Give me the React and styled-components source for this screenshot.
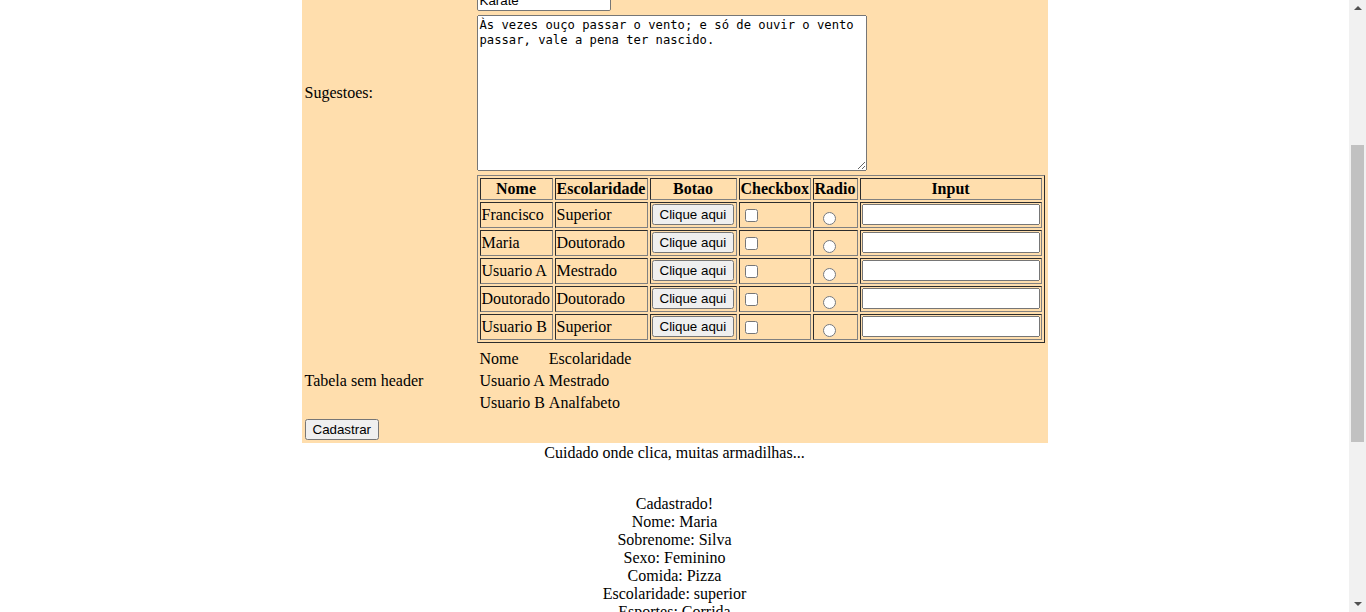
import React, { useLayoutEffect, useRef } from "react";
import styled, { createGlobalStyle } from "styled-components";

const GlobalStyle = createGlobalStyle`
  html {
    overflow-y: scroll;
  }
  body {
    margin: 8px 25px 8px 8px;
    font-family: "Liberation Serif", "Times New Roman", serif;
    font-size: 16px;
    line-height: 18px;
    color: #000;
    background: #fff;
  }
`;

/* the window's scrollbar, as the reference shows it */
const ScrollTrack = styled.div`
  position: fixed;
  top: 0;
  right: 0;
  width: 17px;
  height: 100vh;
  background: #f1f1f1;
  display: flex;
  flex-direction: column;
  align-items: center;
  justify-content: space-between;
  padding: 6px 0;
  box-sizing: border-box;
  z-index: 10;
`;

const Arrow = styled.div`
  width: 0;
  height: 0;
  border-left: 4px solid transparent;
  border-right: 4px solid transparent;
  ${(p) =>
    p.$down
      ? "border-top: 4px solid #505050;"
      : "border-bottom: 4px solid #505050;"}
`;

const Thumb = styled.div`
  position: fixed;
  right: 2px;
  top: 145px;
  width: 13px;
  height: 297px;
  background: #c1c1c1;
  z-index: 11;
`;

const Title = styled.h1`
  text-align: center;
  font-size: 32px;
  line-height: 37px;
  margin: 21px 0;
`;

const Form = styled.form`
  display: grid;
  grid-template-columns: 170px 570px;
  gap: 2px;
  padding: 2px;
  width: 746px;
  box-sizing: border-box;
  margin: 0 auto;
  background: #ffdead;
  align-items: center;
`;

const Cell = styled.div`
  padding: 1px;
  min-height: 18px;
`;

const TextField = styled.input`
  font: 13.333px "Liberation Sans", Arial, sans-serif;
  width: 178px;
  height: 21px;
  box-sizing: border-box;
  margin: 0;
  vertical-align: middle;
`;

const Choice = styled.label`
  margin-right: 4px;
`;

const Select = styled.select`
  font: 13.333px "Liberation Sans", Arial, sans-serif;
  margin: 0;
`;

const ListBox = styled.select`
  display: block;
  font: 13.333px "Liberation Sans", Arial, sans-serif;
  width: 134px;
  margin: 0;
`;

const Suggestions = styled.textarea`
  display: block;
  box-sizing: border-box;
  width: 390px;
  height: 156px;
  margin: 0;
  padding: 2px;
  font-family: "DejaVu Sans Mono", "Liberation Mono", monospace;
  font-size: 12.2px;
  line-height: 15px;
  color: #000;
`;

const DataTable = styled.table`
  width: 568px;
  table-layout: fixed;
  border: 1px outset grey;
  border-spacing: 2px;
  border-collapse: separate;
`;

const Head = styled.th`
  width: ${(p) => p.$w}px;
  box-sizing: border-box;
  border: 1px inset grey;
  padding: 1px;
  font-weight: bold;
  text-align: center;
  white-space: nowrap;
`;

const Data = styled.td`
  box-sizing: border-box;
  height: 26px;
  border: 1px inset grey;
  padding: 1px;
  vertical-align: middle;
  white-space: nowrap;
  overflow: hidden;
`;

const RowButton = styled.button`
  font: 13.333px "Liberation Sans", Arial, sans-serif;
  margin: 0;
  vertical-align: middle;
`;

const Check = styled.input`
  vertical-align: middle;
  margin: 3px 3px 3px 4px;
`;

const Radio = styled.input`
  vertical-align: middle;
  margin: 6px 3px 0 8px;
`;

const PlainTable = styled.table`
  border-spacing: 2px;
  border-collapse: separate;
`;

const PlainCell = styled.td`
  padding: 1px;
  white-space: nowrap;
`;

const Submit = styled.button`
  font: 13.333px "Liberation Sans", Arial, sans-serif;
  margin: 0;
  display: block;
`;

const Notice = styled.div`
  text-align: center;
  margin-top: 1px;
`;

const Result = styled.div`
  text-align: center;
  margin-top: 33px;
  padding-bottom: 290px;
`;

const users = [
  ["Francisco", "Superior"],
  ["Maria", "Doutorado"],
  ["Usuario A", "Mestrado"],
  ["Doutorado", "Doutorado"],
  ["Usuario B", "Superior"],
];

const heads = [
  ["Nome", 73],
  ["Escolaridade", 93],
  ["Botao", 87],
  ["Checkbox", 72],
  ["Radio", 45],
  ["Input", 182],
];

const text =
  "Às vezes ouço passar o vento; e só de ouvir o vento passar, vale a pena ter nascido.";

const results = [
  "Cadastrado!",
  "Nome: Maria",
  "Sobrenome: Silva",
  "Sexo: Feminino",
  "Comida: Pizza",
  "Escolaridade: superior",
  "Esportes: Corrida",
  "Sugestoes: " + text,
];

export default function App() {
  const anchor = useRef(null);

  useLayoutEffect(() => {
    const place = () => {
      const el = anchor.current;
      if (!el) return;
      const top = el.getBoundingClientRect().top + window.scrollY - 15;
      window.scrollTo(0, top);
    };
    place();
    const id = requestAnimationFrame(place);
    return () => cancelAnimationFrame(id);
  }, []);

  return (
    <>
      <GlobalStyle />
      <Title>Campo de Treinamento</Title>
      <Form onSubmit={(e) => e.preventDefault()}>
        <Cell>Nome:</Cell>
        <Cell>
          <TextField defaultValue="Maria" />
        </Cell>
        <Cell>Sobrenome:</Cell>
        <Cell>
          <TextField defaultValue="Silva" />
        </Cell>
        <Cell>Sexo:</Cell>
        <Cell>
          <Choice>
            <input type="radio" name="sexo" /> Masculino
          </Choice>
          <Choice>
            <input type="radio" name="sexo" defaultChecked /> Feminino
          </Choice>
        </Cell>
        <Cell>Qual a sua comida favorita?</Cell>
        <Cell>
          <Choice>
            <input type="checkbox" /> Carne
          </Choice>
          <Choice>
            <input type="checkbox" /> Frango
          </Choice>
          <Choice>
            <input type="checkbox" defaultChecked /> Pizza
          </Choice>
          <Choice>
            <input type="checkbox" /> Vegetariano
          </Choice>
        </Cell>
        <Cell>Escolaridade</Cell>
        <Cell>
          <Select defaultValue="superior">
            <option value="1grauincomp">1o grau incompleto</option>
            <option value="superior">Superior</option>
            <option value="mestrado">Mestrado</option>
            <option value="doutorado">Doutorado</option>
          </Select>
        </Cell>
        <Cell>Pratica esportes?</Cell>
        <Cell>
          <ListBox multiple size={4} defaultValue={["Corrida"]}>
            <option>Natacao</option>
            <option>Futebol</option>
            <option>Corrida</option>
            <option>Karate</option>
            <option>O que eh esporte?</option>
          </ListBox>
        </Cell>

        <Cell>Sugestoes:</Cell>
        <Cell>
          <Suggestions ref={anchor} defaultValue={text} />
        </Cell>

        <Cell />
        <Cell>
          <DataTable>
            <thead>
              <tr>
                {heads.map(([h, w]) => (
                  <Head key={h} $w={w}>
                    {h}
                  </Head>
                ))}
              </tr>
            </thead>
            <tbody>
              {users.map(([nome, esc], i) => (
                <tr key={i}>
                  <Data>{nome}</Data>
                  <Data>{esc}</Data>
                  <Data>
                    <RowButton type="button">Clique aqui</RowButton>
                  </Data>
                  <Data>
                    <Check type="checkbox" />
                  </Data>
                  <Data>
                    <Radio type="radio" name="tabela" />
                  </Data>
                  <Data>
                    <TextField />
                  </Data>
                </tr>
              ))}
            </tbody>
          </DataTable>
        </Cell>

        <Cell>Tabela sem header</Cell>
        <Cell>
          <PlainTable>
            <tbody>
              <tr>
                <PlainCell>Nome</PlainCell>
                <PlainCell>Escolaridade</PlainCell>
              </tr>
              <tr>
                <PlainCell>Usuario A</PlainCell>
                <PlainCell>Mestrado</PlainCell>
              </tr>
              <tr>
                <PlainCell>Usuario B</PlainCell>
                <PlainCell>Analfabeto</PlainCell>
              </tr>
            </tbody>
          </PlainTable>
        </Cell>

        <Cell>
          <Submit type="submit">Cadastrar</Submit>
        </Cell>
        <Cell />
      </Form>
      <Notice>Cuidado onde clica, muitas armadilhas...</Notice>
      <Result>
        {results.map((r) => (
          <div key={r}>{r}</div>
        ))}
      </Result>
      <ScrollTrack>
        <Arrow />
        <Arrow $down />
      </ScrollTrack>
      <Thumb />
    </>
  );
}
